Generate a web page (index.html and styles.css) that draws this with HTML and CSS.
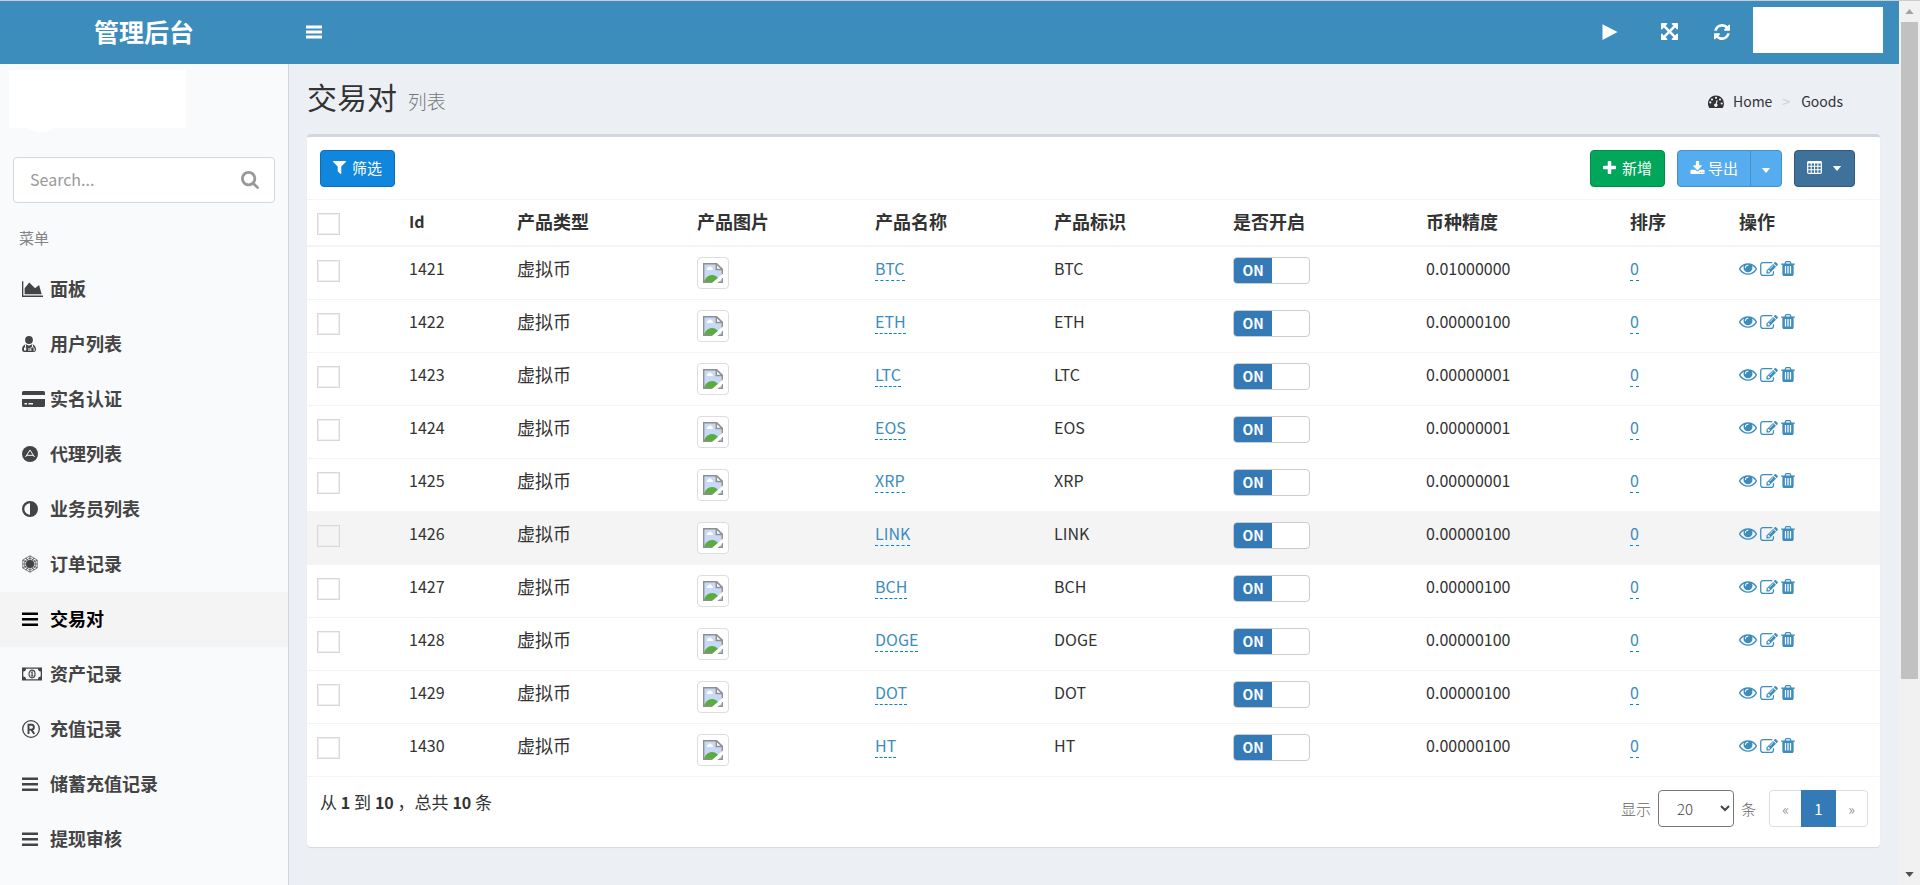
FILE: index.html
```html
<!DOCTYPE html>
<html lang="zh-CN">
<head>
<meta charset="utf-8">
<title>管理后台</title>
<link rel="stylesheet" href="styles.css">
</head>
<body>
<svg class="sprite" aria-hidden="true">
  <symbol id="i-bars" viewBox="0 0 16 16"><path d="M0 1.500h16v3H0zM0 6.500h16v3H0zM0 11.500h16v3H0z"/></symbol>
  <symbol id="i-lines" viewBox="0 0 16 16"><path d="M0 1.500h16v2.500H0zM0 7h16v2.500H0zM0 12.500h16V15H0z"/></symbol>
  <symbol id="i-play" viewBox="0 0 16 16"><path d="M.5.3 15.600 8 .5 15.900z"/></symbol>
  <symbol id="i-expand" viewBox="128 128 1536 1536"><path d="M1411 541l-355 355 355 355 144-144q29-31 70-14 39 17 39 59v448q0 26-19 45t-45 19h-448q-42 0-59-40-17-39 14-69l144-144-355-355-355 355 144 144q31 30 14 69-17 40-59 40h-448q-26 0-45-19t-19-45v-448q0-42 40-59 39-17 69 14l144 144 355-355-355-355-144 144q-19 19-45 19-12 0-24-5-40-17-40-59v-448q0-26 19-45t45-19h448q42 0 59 40 17 39-14 69l-144 144 355 355 355-355-144-144q-31-30-14-69 17-40 59-40h448q26 0 45 19t19 45v448q0 42-39 59-13 5-25 5-26 0-45-19z"/></symbol>
  <symbol id="i-refresh" viewBox="128 128 1536 1536"><path d="M1639 1056q0 5-1 7-64 268-268 434.500t-478 166.500q-146 0-282.500-55t-243.500-157l-129 129q-19 19-45 19t-45-19-19-45v-448q0-26 19-45t45-19h448q26 0 45 19t19 45-19 45l-137 137q71 66 161 102t187 36q134 0 250-65t186-179q11-17 53-117 8-23 30-23h192q13 0 22.500 9.500t9.500 22.500zm25-800v448q0 26-19 45t-45 19h-448q-26 0-45-19t-19-45 19-45l138-138q-148-137-349-137-134 0-250 65t-186 179q-11 17-53 117-8 23-30 23h-199q-13 0-22.500-9.500t-9.500-22.500v-7q65-268 270-434.500t480-166.500q146 0 284 55.500t245 156.500l130-129q19-19 45-19t45 19 19 45z"/></symbol>
  <symbol id="i-search" viewBox="64 128 1664 1664"><path d="M1216 832q0-185-131.500-316.500t-316.500-131.500-316.500 131.500-131.500 316.500 131.500 316.500 316.500 131.500 316.500-131.500 131.500-316.500zm512 832q0 52-38 90t-90 38q-54 0-90-38l-343-342q-179 124-399 124-143 0-273.500-55.500t-225-150-150-225-55.500-273.500 55.500-273.500 150-225 225-150 273.500-55.500 273.500 55.500 225 150 150 225 55.500 273.500q0 220-124 399l343 343q37 37 37 90z"/></symbol>
  <symbol id="i-filter" viewBox="192 256 1408 1408"><path d="M1595 295q17 41-14 70l-493 493v742q0 42-39 59-13 5-25 5-27 0-45-19l-256-256q-19-19-19-45v-486l-493-493q-31-29-14-70 17-39 59-39h1280q42 0 59 39z"/></symbol>
  <symbol id="i-plus" viewBox="192 128 1408 1408"><path d="M1600 736v192q0 40-28 68t-68 28h-416v416q0 40-28 68t-68 28h-192q-40 0-68-28t-28-68v-416h-416q-40 0-68-28t-28-68v-192q0-40 28-68t68-28h416v-416q0-40 28-68t68-28h192q40 0 68 28t28 68v416h416q40 0 68 28t28 68z"/></symbol>
  <symbol id="i-download" viewBox="64 0 1664 1536"><path d="M1344 1344q0-26-19-45t-45-19-45 19-19 45 19 45 45 19 45-19 19-45zm256 0q0-26-19-45t-45-19-45 19-19 45 19 45 45 19 45-19 19-45zm128-224v320q0 40-28 68t-68 28h-1472q-40 0-68-28t-28-68v-320q0-40 28-68t68-28h465l135 136q58 56 136 56t136-56l136-136h464q40 0 68 28t28 68zm-325-569q17 41-14 70l-448 448q-18 19-45 19t-45-19l-448-448q-31-29-14-70 17-39 59-39h256v-448q0-26 19-45t45-19h256q26 0 45 19t19 45v448h256q42 0 59 39z"/></symbol>
  <symbol id="i-table" viewBox="0 0 16 14"><path fill-rule="evenodd" d="M1.500 0h13A1.500 1.500 0 0 1 16 1.500v11A1.500 1.500 0 0 1 14.500 14h-13A1.500 1.500 0 0 1 0 12.500v-11A1.500 1.500 0 0 1 1.500 0zM1.300 2.800v2.300h2.600V2.800zM5 2.800v2.300h2.500V2.800zM8.600 2.800v2.300h2.500V2.800zM12.200 2.800v2.300h2.500V2.800zM1.300 6.300v2.500h2.600V6.300zM5 6.300v2.500h2.500V6.300zM8.600 6.300v2.500h2.500V6.300zM12.200 6.300v2.500h2.500V6.300zM1.300 10v2.600h2.600V10zM5 10v2.600h2.500V10zM8.600 10v2.600h2.500V10zM12.200 10v2.600h2.500V10z"/></symbol>
  <symbol id="i-caret" viewBox="0 0 10 6"><path d="M0 0h10L5 6z"/></symbol>
  <symbol id="i-gauge" viewBox="0 0 16 13"><path fill-rule="evenodd" d="M8 .5a8 8 0 0 1 8 8c0 1.500-.4 2.900-1.200 4.200a.6.6 0 0 1-.5.300H1.700a.6.600 0 0 1-.5-.3A8 8 0 0 1 8 .5zM3.400 7.400a1.100 1.100 0 1 0-2.200 0 1.100 1.100 0 0 0 2.200 0zM5.100 4.500a1.100 1.100 0 1 0-2.200 0 1.100 1.100 0 0 0 2.200 0zM9.100 2.800a1.100 1.100 0 1 0-2.200 0 1.100 1.100 0 0 0 2.200 0zM13.100 4.500a1.100 1.100 0 1 0-2.200 0 1.100 1.100 0 0 0 2.200 0zM14.800 8.500a1.100 1.100 0 1 0-2.200 0 1.100 1.100 0 0 0 2.200 0zM9.700 5.400 8.800 8.700a1.700 1.700 0 1 1-1.100-.3l.9-3.300z"/></symbol>
  <symbol id="i-chart" viewBox="0 128 2048 1536"><path d="M2048 1536v128h-2048v-1536h128v1408h1920zm-384-1024l256 896h-1664v-576l448-576 576 576z"/></symbol>
  <symbol id="i-user" viewBox="0 0 14 16"><circle cx="7" cy="4" r="3.900"/><path d="M3.800 8.200C1.200 8.700 0 11 0 13.500 0 15 .8 16 2.300 16h9.400c1.500 0 2.300-1 2.300-2.500 0-2.500-1.200-4.800-3.800-5.300L7 9.800z"/><path fill="none" stroke="#f9fafc" stroke-width="1" d="M3.500 8.500v3M10.500 8.500v2.500M8.800 15v-2.500c0-2 3.300-2 3.300 0V15M7 12v3"/><path fill="#f9fafc" d="M2 11.500h2.200v3H2z"/></symbol>
  <symbol id="i-card" viewBox="0 0 23 16"><path fill-rule="evenodd" d="M1.500 0h20A1.500 1.500 0 0 1 23 1.500V4H0V1.500A1.500 1.500 0 0 1 1.500 0zM0 8h23v6.500a1.500 1.500 0 0 1-1.500 1.500h-20A1.500 1.500 0 0 1 0 14.500zM2.500 12v1.500H5V12zM6.500 12v1.500H11V12z"/></symbol>
  <symbol id="i-adn" viewBox="0 0 16 16"><circle cx="8" cy="8" r="8"/><path fill="none" stroke="#f9fafc" d="M3.500 11 8 4l4.500 7M5 9.300h6"/></symbol>
  <symbol id="i-adjust" viewBox="0 0 16 16"><path fill-rule="evenodd" d="M8 0a8 8 0 1 1 0 16A8 8 0 0 1 8 0zm0 2.300v11.400A5.700 5.700 0 0 1 8 2.300z"/></symbol>
  <symbol id="i-hex" viewBox="0 0 16 18"><circle cx="8" cy="9" r="4"/><path fill="none" stroke="currentColor" stroke-width=".7" d="M8 .8 15.200 5v8L8 17.200.8 13V5zM8 3l5.200 3v6L8 15l-5.200-3V6zM8 .8v16.400M.8 5l14.400 8M15.200 5.100.8 13M4 2.800l8 12.400M12 2.800 4 15.200M.8 9h14.400"/></symbol>
  <symbol id="i-money" viewBox="0 0 20 14"><path fill-rule="evenodd" d="M0 .5h20v13H0zM4 1.800A2.700 2.700 0 0 1 1.300 4.500v5A2.700 2.700 0 0 1 4 12.200h12a2.700 2.700 0 0 1 2.700-2.700v-5A2.700 2.700 0 0 1 16 1.800z"/><ellipse cx="10" cy="7" rx="3" ry="3.800" fill="none" stroke="currentColor" stroke-width="1.200"/><path d="M8.500 5.400 10 4.300h.7v4.200h.9v1H8.500v-1h1V5.700z"/></symbol>
  <symbol id="i-reg" viewBox="0 0 18 18"><circle cx="9" cy="9" r="8.300" fill="none" stroke="currentColor" stroke-width="1.300"/><path fill="none" stroke="currentColor" stroke-width="1.900" d="M6.500 14V4.800h2.800q2.600 0 2.600 2.400T9.300 9.600H6.500M9.300 9.600 12.300 14"/></symbol>
  <symbol id="i-eye" viewBox="0 384 1792 1152"><path d="M1664 960q-152-236-381-353 61 104 61 225 0 185-131.500 316.500t-316.500 131.500-316.500-131.500-131.500-316.500q0-121 61-225-229 117-381 353 133 205 333.500 326.500t434.500 121.500 434.500-121.500 333.500-326.500zm-720-384q0-20-14-34t-34-14q-125 0-214.500 89.500t-89.500 214.500q0 20 14 34t34 14 34-14 14-34q0-86 61-147t147-61q20 0 34-14t14-34zm848 384q0 34-20 69-140 230-376.500 368.500t-499.500 138.500-499.500-139-376.500-368q-20-35-20-69t20-69q140-229 376.500-368t499.500-139 499.500 139 376.500 368q20 35 20 69z"/></symbol>
  <symbol id="i-edit" viewBox="0 128 1792 1408"><path d="M888 1184l116-116-152-152-116 116v56h96v96h56zm440-720q-16-16-33 1l-350 350q-17 17-1 33t33-1l350-350q17-17 1-33zm80 594v190q0 119-84.500 203.500t-203.500 84.500h-832q-119 0-203.500-84.500t-84.500-203.500v-832q0-119 84.500-203.500t203.500-84.500h832q63 0 117 25 15 7 18 23 3 17-9 29l-49 49q-14 14-32 8-23-6-45-6h-832q-66 0-113 47t-47 113v832q0 66 47 113t113 47h832q66 0 113-47t47-113v-126q0-13 9-22l64-64q15-15 35-7t20 29zm-96-738l288 288-672 672h-288v-288zm444 132l-92 92-288-288 92-92q28-28 68-28t68 28l152 152q28 28 28 68t-28 68z"/></symbol>
  <symbol id="i-trash" viewBox="192 128 1408 1536"><path d="M704 1376v-704q0-14-9-23t-23-9h-64q-14 0-23 9t-9 23v704q0 14 9 23t23 9h64q14 0 23-9t9-23zm256 0v-704q0-14-9-23t-23-9h-64q-14 0-23 9t-9 23v704q0 14 9 23t23 9h64q14 0 23-9t9-23zm256 0v-704q0-14-9-23t-23-9h-64q-14 0-23 9t-9 23v704q0 14 9 23t23 9h64q14 0 23-9t9-23zm-544-992h448l-48-117q-7-9-17-11h-317q-10 2-17 11zm928 32v64q0 14-9 23t-23 9h-96v948q0 83-47 143.500t-113 60.500h-832q-66 0-113-58.500t-47-141.500v-952h-96q-14 0-23-9t-9-23v-64q0-14 9-23t23-9h309l70-167q15-37 54-63t79-26h320q40 0 79 26t54 63l70 167h309q14 0 23 9t9 23z"/></symbol>
  <symbol id="i-broken" viewBox="0 0 20 20"><path fill="#c8d9f7" d="M1 1h13l5 5v13H1z"/><path fill="#fff" d="M4 7a1.500 1.500 0 0 1 1-2.200 2 2 0 0 1 3.800 0A1.300 1.300 0 0 1 9.500 7z"/><path fill="#5aac3c" d="M1 19c1-4 4-7 8-7 3 0 5 1.500 6 3v4z"/><path fill="none" stroke="#8f8f8f" stroke-width="1.400" d="M.7.700h12.900l5.700 5.700v12.900H.7z"/><path fill="#fff" stroke="#8f8f8f" stroke-width="1.400" d="M13.300.7v5.800h6z"/><path fill="#fff" d="M20 10.500v4L14.500 20H9z"/></symbol>
</svg>

<div class="window">
  <div class="page">
    <header class="topbar">
      <a class="logo" href="#">管理后台</a>
      <button class="icon-btn" type="button" aria-label="切换菜单"><svg class="ic16"><use href="#i-bars"/></svg></button>
      <div class="tools">
        <button class="icon-btn" type="button" aria-label="播放"><svg class="ic16"><use href="#i-play"/></svg></button>
        <button class="icon-btn gap-wide" type="button" aria-label="全屏"><svg class="ic17"><use href="#i-expand"/></svg></button>
        <button class="icon-btn gap-mid" type="button" aria-label="刷新"><svg class="ic16"><use href="#i-refresh"/></svg></button>
        <div class="account"></div>
      </div>
    </header>
    <div class="body">
      <aside class="sidebar">
        <div class="user-panel"></div>
        <form class="search">
          <input type="text" placeholder="Search..." aria-label="Search">
          <button type="button" aria-label="搜索"><svg class="ic18"><use href="#i-search"/></svg></button>
        </form>
        <div class="menu-label">菜单</div>
        <nav class="menu">
          <a href="#"><span class="mi"><svg class="w21"><use href="#i-chart"/></svg></span>面板</a>
          <a href="#"><span class="mi"><svg class="w14"><use href="#i-user"/></svg></span>用户列表</a>
          <a href="#"><span class="mi"><svg class="w23"><use href="#i-card"/></svg></span>实名认证</a>
          <a href="#"><span class="mi"><svg class="ic16"><use href="#i-adn"/></svg></span>代理列表</a>
          <a href="#"><span class="mi"><svg class="ic16"><use href="#i-adjust"/></svg></span>业务员列表</a>
          <a href="#"><span class="mi"><svg class="hex"><use href="#i-hex"/></svg></span>订单记录</a>
          <a href="#" class="active"><span class="mi"><svg class="ic16"><use href="#i-lines"/></svg></span>交易对</a>
          <a href="#"><span class="mi"><svg class="w20"><use href="#i-money"/></svg></span>资产记录</a>
          <a href="#"><span class="mi"><svg class="ic18"><use href="#i-reg"/></svg></span>充值记录</a>
          <a href="#"><span class="mi"><svg class="ic16"><use href="#i-lines"/></svg></span>储蓄充值记录</a>
          <a href="#"><span class="mi"><svg class="ic16"><use href="#i-lines"/></svg></span>提现审核</a>
        </nav>
      </aside>
      <main class="content">
        <div class="heading">
          <h1>交易对 <small>列表</small></h1>
          <nav class="crumbs">
            <a href="#"><svg class="gauge"><use href="#i-gauge"/></svg>Home</a><span class="sep">&gt;</span><span>Goods</span>
          </nav>
        </div>
        <section class="box">
          <div class="toolbar">
            <button class="btn blue" type="button"><svg class="ic13"><use href="#i-filter"/></svg>筛选</button>
            <div class="actions">
              <button class="btn green" type="button"><svg class="ic13"><use href="#i-plus"/></svg>新增</button>
              <div class="group">
                <button class="btn sky" type="button"><svg class="ic15"><use href="#i-download"/></svg>导出</button><button class="btn sky drop" type="button" aria-label="导出选项"><svg class="caret"><use href="#i-caret"/></svg></button>
              </div>
              <button class="btn navy" type="button" aria-label="显示列"><svg class="ic15"><use href="#i-table"/></svg><svg class="caret"><use href="#i-caret"/></svg></button>
            </div>
          </div>
          <table class="grid">
            <colgroup><col class="c-check"><col class="c-id"><col class="c-type"><col class="c-img"><col class="c-name"><col class="c-name"><col class="c-on"><col class="c-prec"><col class="c-sort"><col class="c-op"></colgroup>
            <thead><tr><th><input type="checkbox" aria-label="全选"></th><th class="lat">Id</th><th>产品类型</th><th>产品图片</th><th>产品名称</th><th>产品标识</th><th>是否开启</th><th>币种精度</th><th>排序</th><th>操作</th></tr></thead>
            <tbody>
              <tr><td><input type="checkbox" aria-label="1421"></td><td>1421</td><td class="zh">虚拟币</td><td><span class="thumb"><svg><use href="#i-broken"/></svg></span></td><td><a class="edit" href="#">BTC</a></td><td>BTC</td><td><button class="switch" type="button" role="switch" aria-checked="true"><span>ON</span></button></td><td>0.01000000</td><td><a class="edit" href="#">0</a></td><td><div class="ops"><a href="#" aria-label="查看"><svg class="eye"><use href="#i-eye"/></svg></a><a href="#" aria-label="编辑"><svg class="pen"><use href="#i-edit"/></svg></a><a href="#" aria-label="删除"><svg class="bin"><use href="#i-trash"/></svg></a></div></td></tr>
              <tr><td><input type="checkbox" aria-label="1422"></td><td>1422</td><td class="zh">虚拟币</td><td><span class="thumb"><svg><use href="#i-broken"/></svg></span></td><td><a class="edit" href="#">ETH</a></td><td>ETH</td><td><button class="switch" type="button" role="switch" aria-checked="true"><span>ON</span></button></td><td>0.00000100</td><td><a class="edit" href="#">0</a></td><td><div class="ops"><a href="#" aria-label="查看"><svg class="eye"><use href="#i-eye"/></svg></a><a href="#" aria-label="编辑"><svg class="pen"><use href="#i-edit"/></svg></a><a href="#" aria-label="删除"><svg class="bin"><use href="#i-trash"/></svg></a></div></td></tr>
              <tr><td><input type="checkbox" aria-label="1423"></td><td>1423</td><td class="zh">虚拟币</td><td><span class="thumb"><svg><use href="#i-broken"/></svg></span></td><td><a class="edit" href="#">LTC</a></td><td>LTC</td><td><button class="switch" type="button" role="switch" aria-checked="true"><span>ON</span></button></td><td>0.00000001</td><td><a class="edit" href="#">0</a></td><td><div class="ops"><a href="#" aria-label="查看"><svg class="eye"><use href="#i-eye"/></svg></a><a href="#" aria-label="编辑"><svg class="pen"><use href="#i-edit"/></svg></a><a href="#" aria-label="删除"><svg class="bin"><use href="#i-trash"/></svg></a></div></td></tr>
              <tr><td><input type="checkbox" aria-label="1424"></td><td>1424</td><td class="zh">虚拟币</td><td><span class="thumb"><svg><use href="#i-broken"/></svg></span></td><td><a class="edit" href="#">EOS</a></td><td>EOS</td><td><button class="switch" type="button" role="switch" aria-checked="true"><span>ON</span></button></td><td>0.00000001</td><td><a class="edit" href="#">0</a></td><td><div class="ops"><a href="#" aria-label="查看"><svg class="eye"><use href="#i-eye"/></svg></a><a href="#" aria-label="编辑"><svg class="pen"><use href="#i-edit"/></svg></a><a href="#" aria-label="删除"><svg class="bin"><use href="#i-trash"/></svg></a></div></td></tr>
              <tr><td><input type="checkbox" aria-label="1425"></td><td>1425</td><td class="zh">虚拟币</td><td><span class="thumb"><svg><use href="#i-broken"/></svg></span></td><td><a class="edit" href="#">XRP</a></td><td>XRP</td><td><button class="switch" type="button" role="switch" aria-checked="true"><span>ON</span></button></td><td>0.00000001</td><td><a class="edit" href="#">0</a></td><td><div class="ops"><a href="#" aria-label="查看"><svg class="eye"><use href="#i-eye"/></svg></a><a href="#" aria-label="编辑"><svg class="pen"><use href="#i-edit"/></svg></a><a href="#" aria-label="删除"><svg class="bin"><use href="#i-trash"/></svg></a></div></td></tr>
              <tr class="hover"><td><input type="checkbox" aria-label="1426"></td><td>1426</td><td class="zh">虚拟币</td><td><span class="thumb"><svg><use href="#i-broken"/></svg></span></td><td><a class="edit" href="#">LINK</a></td><td>LINK</td><td><button class="switch" type="button" role="switch" aria-checked="true"><span>ON</span></button></td><td>0.00000100</td><td><a class="edit" href="#">0</a></td><td><div class="ops"><a href="#" aria-label="查看"><svg class="eye"><use href="#i-eye"/></svg></a><a href="#" aria-label="编辑"><svg class="pen"><use href="#i-edit"/></svg></a><a href="#" aria-label="删除"><svg class="bin"><use href="#i-trash"/></svg></a></div></td></tr>
              <tr><td><input type="checkbox" aria-label="1427"></td><td>1427</td><td class="zh">虚拟币</td><td><span class="thumb"><svg><use href="#i-broken"/></svg></span></td><td><a class="edit" href="#">BCH</a></td><td>BCH</td><td><button class="switch" type="button" role="switch" aria-checked="true"><span>ON</span></button></td><td>0.00000100</td><td><a class="edit" href="#">0</a></td><td><div class="ops"><a href="#" aria-label="查看"><svg class="eye"><use href="#i-eye"/></svg></a><a href="#" aria-label="编辑"><svg class="pen"><use href="#i-edit"/></svg></a><a href="#" aria-label="删除"><svg class="bin"><use href="#i-trash"/></svg></a></div></td></tr>
              <tr><td><input type="checkbox" aria-label="1428"></td><td>1428</td><td class="zh">虚拟币</td><td><span class="thumb"><svg><use href="#i-broken"/></svg></span></td><td><a class="edit" href="#">DOGE</a></td><td>DOGE</td><td><button class="switch" type="button" role="switch" aria-checked="true"><span>ON</span></button></td><td>0.00000100</td><td><a class="edit" href="#">0</a></td><td><div class="ops"><a href="#" aria-label="查看"><svg class="eye"><use href="#i-eye"/></svg></a><a href="#" aria-label="编辑"><svg class="pen"><use href="#i-edit"/></svg></a><a href="#" aria-label="删除"><svg class="bin"><use href="#i-trash"/></svg></a></div></td></tr>
              <tr><td><input type="checkbox" aria-label="1429"></td><td>1429</td><td class="zh">虚拟币</td><td><span class="thumb"><svg><use href="#i-broken"/></svg></span></td><td><a class="edit" href="#">DOT</a></td><td>DOT</td><td><button class="switch" type="button" role="switch" aria-checked="true"><span>ON</span></button></td><td>0.00000100</td><td><a class="edit" href="#">0</a></td><td><div class="ops"><a href="#" aria-label="查看"><svg class="eye"><use href="#i-eye"/></svg></a><a href="#" aria-label="编辑"><svg class="pen"><use href="#i-edit"/></svg></a><a href="#" aria-label="删除"><svg class="bin"><use href="#i-trash"/></svg></a></div></td></tr>
              <tr><td><input type="checkbox" aria-label="1430"></td><td>1430</td><td class="zh">虚拟币</td><td><span class="thumb"><svg><use href="#i-broken"/></svg></span></td><td><a class="edit" href="#">HT</a></td><td>HT</td><td><button class="switch" type="button" role="switch" aria-checked="true"><span>ON</span></button></td><td>0.00000100</td><td><a class="edit" href="#">0</a></td><td><div class="ops"><a href="#" aria-label="查看"><svg class="eye"><use href="#i-eye"/></svg></a><a href="#" aria-label="编辑"><svg class="pen"><use href="#i-edit"/></svg></a><a href="#" aria-label="删除"><svg class="bin"><use href="#i-trash"/></svg></a></div></td></tr>
            </tbody>
          </table>
          <div class="box-foot">
            <div class="summary">从 <b>1</b> 到 <b>10</b> ，总共 <b>10</b> 条</div>
            <div class="paging">
              <label for="per-page">显示</label>
              <select id="per-page"><option>20</option></select>
              <span>条</span>
              <ul class="pages"><li><a href="#">«</a></li><li class="current"><a href="#">1</a></li><li><a href="#">»</a></li></ul>
            </div>
          </div>
        </section>
      </main>
    </div>
  </div>
  <div class="scrollbar" aria-hidden="true">
    <svg class="arrow up"><use href="#i-caret"/></svg>
    <div class="track"><div class="thumb-bar"></div></div>
    <svg class="arrow"><use href="#i-caret"/></svg>
  </div>
</div>
</body>
</html>
```

FILE: styles.css
```css
* { box-sizing: border-box; }

body {
  margin: 0;
  height: 100vh;
  overflow: hidden;
  border-top: 1px solid #cccccc;
  background: #ecf0f5;
  color: #333;
  font: 16px/25px "Noto Sans CJK SC", sans-serif;
}

a { color: inherit; text-decoration: none; }
button, input, select { font: inherit; }
svg { display: block; fill: currentColor; }
.sprite { position: absolute; width: 0; height: 0; }

.ic13 { width: 13px; height: 13px; }
.ic15 { width: 15px; height: 13px; }
.ic16 { width: 16px; height: 16px; }
.ic17 { width: 17px; height: 17px; }
.ic18 { width: 18px; height: 18px; }
.w14 { width: 14px; height: 16px; }
.w20 { width: 20px; height: 14px; }
.w21 { width: 21px; height: 16px; }
.w23 { width: 23px; height: 16px; }
.hex { width: 16px; height: 18px; }

.window { display: flex; height: 100%; }
.page { flex: 1; min-width: 0; display: flex; flex-direction: column; }

/* Top bar */
.topbar {
  display: flex;
  align-items: center;
  flex: none;
  height: 63px;
  padding-bottom: 2px;
  background: #3c8dbc;
  color: #fff;
}
.logo {
  width: 288px;
  margin-right: 18px;
  text-align: center;
  font-size: 25px;
  font-weight: 700;
}
.icon-btn { padding: 0; border: 0; background: none; color: #fff; }
.tools { display: flex; align-items: center; margin-left: auto; }
.gap-wide { margin-left: 43px; }
.gap-mid { margin-left: 36px; }
.account {
  width: 130px;
  height: 46px;
  margin: 0 16px 3px 23px;
  background: #fff;
}

.body { flex: 1; min-height: 0; display: flex; }

/* Sidebar */
.sidebar {
  flex: none;
  width: 289px;
  border-right: 1px solid #d2d6de;
  background: #f9fafc;
}
.user-panel {
  position: relative;
  width: 177px;
  height: 58px;
  margin: 6px 0 29px 9px;
  background: #fff;
}
.user-panel::after {
  content: "";
  position: absolute;
  left: 8px;
  bottom: -4px;
  width: 48px;
  height: 48px;
  border-radius: 50%;
  background: #fff;
}
.search {
  display: flex;
  height: 46px;
  margin: 0 13px;
  border: 1px solid #d2d6de;
  border-radius: 4px;
  background: #fff;
}
.search input {
  flex: 1;
  min-width: 0;
  padding: 0 16px 2px;
  border: 0;
  background: none;
  color: #666;
}
.search input::placeholder { color: #999; }
.search button { padding: 0 15px; border: 0; background: none; color: #999; }
.menu-label { padding: 22px 19px 12px; font-size: 15px; color: #848484; }
.menu a {
  display: flex;
  align-items: center;
  height: 55px;
  padding: 0 0 2px 22px;
  color: #444;
  font-size: 18px;
  font-weight: 700;
}
.menu .active { background: #f4f4f5; color: #000; }
.mi { width: 28px; }

/* Page heading */
.content { flex: 1; min-width: 0; padding: 0 19px 0 18px; }
.heading {
  display: flex;
  align-items: center;
  justify-content: space-between;
  height: 70px;
}
h1 { margin: 0; padding-bottom: 2px; font-size: 30px; font-weight: 400; line-height: 40px; }
h1 small { margin-left: 4px; font-size: 19px; font-weight: 300; color: #777; }
.crumbs { display: flex; padding: 4px 37px 0 0; font-size: 14px; }
.crumbs a { display: flex; align-items: center; gap: 9px; }
.gauge { width: 16px; height: 13px; }
.sep { margin: 0 11px 0 10px; color: #ccc; }

/* Data box */
.box {
  border-top: 3px solid #d2d6de;
  border-radius: 4px;
  background: #fff;
  box-shadow: 0 1px 1px rgba(0, 0, 0, 0.1);
}
.toolbar {
  display: flex;
  justify-content: space-between;
  padding: 13px 25px 12px 13px;
  border-bottom: 1px solid #f4f4f4;
}
.actions { display: flex; gap: 12px; }
.group { display: flex; }
.btn {
  display: flex;
  align-items: center;
  justify-content: center;
  gap: 6px;
  height: 37px;
  padding: 0 12px 3px;
  border: 1px solid;
  border-radius: 4px;
  color: #fff;
  font-size: 15px;
}
.blue { background: #1087dd; border-color: #0d6eb5; }
.green { background: #00a65a; border-color: #008d4c; }
.sky { gap: 3px; background: #55acee; border-color: #4690c8; border-radius: 4px 0 0 4px; }
.drop { margin-left: -1px; padding: 0 10px; border-radius: 0 4px 4px 0; }
.navy { gap: 10px; background: #3f729b; border-color: #305a7c; }
.caret { width: 10px; height: 5px; margin-top: 3px; }

.grid { width: 100%; table-layout: fixed; border-collapse: separate; border-spacing: 0; }
.c-check { width: 5.85%; }
.c-id { width: 6.87%; }
.c-type { width: 11.44%; }
.c-img { width: 11.32%; }
.c-name { width: 11.38%; }
.c-on { width: 12.27%; }
.c-prec { width: 12.97%; }
.c-sort { width: 6.93%; }
.grid th, .grid td { padding: 10px 10px 0; text-align: left; vertical-align: top; line-height: 23px; }
.grid th { height: 47px; border-bottom: 2px solid #f4f4f4; font-size: 18px; }
.grid th.lat { font-size: 16px; }
.grid td { height: 53px; border-bottom: 1px solid #f4f4f4; }
.grid .zh { font-size: 18px; }
.hover td { background: #f4f4f4; }
.grid input {
  appearance: none;
  display: block;
  width: 23px;
  height: 22px;
  margin: 3px 0 0;
  border: 1px solid #d8d8d8;
  box-shadow: inset 0 0 0 1px #efefef;
}
.thumb {
  display: block;
  width: 32px;
  padding: 5px;
  border: 1px solid #ddd;
  border-radius: 4px;
  background: #fff;
}
.thumb svg { width: 20px; height: 20px; }
.edit { border-bottom: 1px dashed #0088cc; color: #3c8dbc; }
.switch {
  display: block;
  width: 77px;
  height: 27px;
  padding: 0;
  overflow: hidden;
  border: 1px solid #ccc;
  border-radius: 4px;
  background: #fff;
}
.switch span {
  display: block;
  width: 38px;
  background: #337ab7;
  color: #fff;
  font-size: 14px;
  font-weight: 700;
  line-height: 25px;
}
.ops { display: flex; align-items: center; gap: 3px; height: 23px; color: #3c8dbc; }
.eye { width: 18px; height: 12px; }
.pen { width: 18px; height: 14px; }
.bin { width: 14px; height: 15px; }

.box-foot { display: flex; justify-content: space-between; padding: 13px 12px 20px 13px; }
.summary { font-size: 17px; line-height: 23px; }
.summary b { font-size: 16px; }
.paging { display: flex; align-items: center; gap: 7px; color: #666; font-size: 15px; font-weight: 300; }
.paging select {
  width: 76px;
  height: 37px;
  padding: 0 14px;
  border: 1px solid #767676;
  border-radius: 4px;
  background: #fff;
  color: #444;
}
.pages {
  display: flex;
  margin: 0 0 0 6px;
  padding: 0;
  border-radius: 4px;
  overflow: hidden;
  list-style: none;
}
.pages a {
  display: block;
  min-width: 32px;
  padding: 5px 0;
  border: 1px solid #ddd;
  text-align: center;
  color: #777;
}
.pages li:first-child a { border-radius: 4px 0 0 4px; border-right: 0; }
.pages li:last-child a { border-radius: 0 4px 4px 0; border-left: 0; }
.pages .current a { min-width: 35px; border-color: #337ab7; background: #337ab7; color: #fff; font-weight: 400; }

/* Scroll bar */
.scrollbar {
  display: flex;
  flex-direction: column;
  align-items: center;
  flex: none;
  width: 21px;
  background: #f1f1f1;
  color: #505050;
}
.arrow { width: 9px; height: 5px; margin: 8px 0; }
.up { transform: rotate(180deg); color: #a3a3a3; }
.track { flex: 1; width: 17px; }
.thumb-bar { height: 78%; background: #c1c1c1; }
```
